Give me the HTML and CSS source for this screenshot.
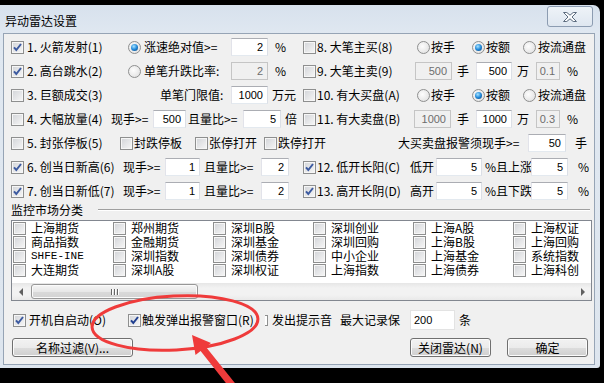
FILE: index.html
```html
<!DOCTYPE html>
<html lang="zh-CN">
<head>
    <meta charset="UTF-8">
    <title>异动雷达设置</title>
    <link rel="stylesheet" href="styles.css">
</head>
<body>
<div class="desk">
    <div class="window">
        <div class="titlebar">
            <span class="title">异动雷达设置</span>
            <span class="close">
                <svg width="14" height="10" viewBox="0 0 14 10"><polygon points="0.5,0.5 3.8,0.5 7,3.2 10.2,0.5 13.5,0.5 9,5 13.5,9.5 10.2,9.5 7,6.8 3.8,9.5 0.5,9.5 5,5" fill="#fbfcfd" stroke="#5d6c7f" stroke-width="1"/></svg>
            </span>
        </div>
        <div class="client">
            <div class="rules">
                <!-- row 1 -->
                <div class="row">
                    <div class="half">
                        <span class="cb on"><svg width="11" height="11" viewBox="0 0 11 11"><polyline points="2,5.3 4.3,8 9,2" fill="none" stroke="#3c5aa0" stroke-width="2"/></svg></span>
                        <span class="t w101">1. 火箭发射(1)</span>
                        <span class="rd on"></span>
                        <span class="t w87 ml3">涨速绝对值&gt;=</span>
                        <span class="box b37">2</span>
                        <span class="t ml7">%</span>
                    </div>
                    <div class="half r">
                        <span class="cb"></span>
                        <span class="t w100">8. 大笔主买(8)</span>
                        <span class="rd"></span><span class="t w41 ml1">按手</span>
                        <span class="rd on"></span><span class="t w37 ml1">按额</span>
                        <span class="rd"></span><span class="t ml2">按流通盘</span>
                    </div>
                </div>
                <!-- row 2 -->
                <div class="row">
                    <div class="half">
                        <span class="cb on"><svg width="11" height="11" viewBox="0 0 11 11"><polyline points="2,5.3 4.3,8 9,2" fill="none" stroke="#3c5aa0" stroke-width="2"/></svg></span>
                        <span class="t w101">2. 高台跳水(2)</span>
                        <span class="rd"></span>
                        <span class="t w87 ml3">单笔升跌比率:</span>
                        <span class="box b37 off">2</span>
                        <span class="t ml7">%</span>
                    </div>
                    <div class="half r">
                        <span class="cb"></span>
                        <span class="t w98">9. 大笔主卖(9)</span>
                        <span class="box b37 off">500</span>
                        <span class="t w19 ml5">手</span>
                        <span class="box b36">500</span>
                        <span class="t w19 ml5">万</span>
                        <span class="box b24 off">0.1</span>
                        <span class="t ml7">%</span>
                    </div>
                </div>
                <!-- row 3 -->
                <div class="row">
                    <div class="half">
                        <span class="cb"></span>
                        <span class="t w133">3. 巨额成交(3)</span>
                        <span class="t w71">单笔门限值:</span>
                        <span class="box b37">1000</span>
                        <span class="t ml4">万元</span>
                    </div>
                    <div class="half r">
                        <span class="cb"></span>
                        <span class="t w100">10. 有大买盘(A)</span>
                        <span class="rd"></span><span class="t w41 ml1">按手</span>
                        <span class="rd on"></span><span class="t w37 ml1">按额</span>
                        <span class="rd"></span><span class="t ml2">按流通盘</span>
                    </div>
                </div>
                <!-- row 4 -->
                <div class="row">
                    <div class="half">
                        <span class="cb"></span>
                        <span class="t w84">4. 大幅放量(4)</span>
                        <span class="t w42">现手&gt;=</span>
                        <span class="box b33">500</span>
                        <span class="t w55 ml2">且量比&gt;=</span>
                        <span class="box b38">5</span>
                        <span class="t ml4">倍</span>
                    </div>
                    <div class="half r">
                        <span class="cb"></span>
                        <span class="t w97">11. 有大卖盘(B)</span>
                        <span class="box b37 off">1000</span>
                        <span class="t w19 ml6">手</span>
                        <span class="box b36">1000</span>
                        <span class="t w19 ml5">万</span>
                        <span class="box b24 off">0.3</span>
                        <span class="t ml7">%</span>
                    </div>
                </div>
                <!-- row 5 -->
                <div class="row">
                    <div class="half">
                        <span class="cb"></span>
                        <span class="t w93">5. 封张停板(5)</span>
                        <span class="cb"></span><span class="t w61 ml-2">封跌停板</span>
                        <span class="cb"></span><span class="t w55 ml-2">张停打开</span>
                        <span class="cb"></span><span class="t ml-2">跌停打开</span>
                    </div>
                    <div class="half r">
                        <span class="t w130 ml95">大买卖盘报警须现手&gt;=</span>
                        <span class="box b38">50</span>
                        <span class="t ml9">手</span>
                    </div>
                </div>
                <!-- row 6 -->
                <div class="row">
                    <div class="half">
                        <span class="cb on"><svg width="11" height="11" viewBox="0 0 11 11"><polyline points="2,5.3 4.3,8 9,2" fill="none" stroke="#3c5aa0" stroke-width="2"/></svg></span>
                        <span class="t w96">6. 创当日新高(6)</span>
                        <span class="t w42">现手&gt;=</span>
                        <span class="box b35">1</span>
                        <span class="t w57 ml4">且量比&gt;=</span>
                        <span class="box b28">2</span>
                    </div>
                    <div class="half r">
                        <span class="cb on"><svg width="11" height="11" viewBox="0 0 11 11"><polyline points="2,5.3 4.3,8 9,2" fill="none" stroke="#3c5aa0" stroke-width="2"/></svg></span>
                        <span class="t w93">12. 低开长阳(C)</span>
                        <span class="t w26">低开</span>
                        <span class="box b46">5</span>
                        <span class="t w46 ml3">%且上涨</span>
                        <span class="box b37">5</span>
                        <span class="t ml10">%</span>
                    </div>
                </div>
                <!-- row 7 -->
                <div class="row">
                    <div class="half">
                        <span class="cb on"><svg width="11" height="11" viewBox="0 0 11 11"><polyline points="2,5.3 4.3,8 9,2" fill="none" stroke="#3c5aa0" stroke-width="2"/></svg></span>
                        <span class="t w96">7. 创当日新低(7)</span>
                        <span class="t w42">现手&gt;=</span>
                        <span class="box b35">1</span>
                        <span class="t w57 ml4">且量比&gt;=</span>
                        <span class="box b28">2</span>
                    </div>
                    <div class="half r">
                        <span class="cb on"><svg width="11" height="11" viewBox="0 0 11 11"><polyline points="2,5.3 4.3,8 9,2" fill="none" stroke="#3c5aa0" stroke-width="2"/></svg></span>
                        <span class="t w93">13. 高开长阴(D)</span>
                        <span class="t w26">高开</span>
                        <span class="box b46">5</span>
                        <span class="t w46 ml3">%且下跌</span>
                        <span class="box b37">5</span>
                        <span class="t ml10">%</span>
                    </div>
                </div>
            </div>

            <div class="group">
                <span class="t">监控市场分类</span>
                <i class="group-line"></i>
            </div>

            <div class="list">
                <div class="markets">
                    <div class="item"><span class="cb"></span>上海期货</div>
                    <div class="item"><span class="cb"></span>商品指数</div>
                    <div class="item"><span class="cb"></span><span class="mono">SHFE-INE</span></div>
                    <div class="item"><span class="cb"></span>大连期货</div>
                    <div class="item"><span class="cb"></span>郑州期货</div>
                    <div class="item"><span class="cb"></span>金融期货</div>
                    <div class="item"><span class="cb"></span>深圳指数</div>
                    <div class="item"><span class="cb"></span>深圳A股</div>
                    <div class="item"><span class="cb"></span>深圳B股</div>
                    <div class="item"><span class="cb"></span>深圳基金</div>
                    <div class="item"><span class="cb"></span>深圳债券</div>
                    <div class="item"><span class="cb"></span>深圳权证</div>
                    <div class="item"><span class="cb"></span>深圳创业</div>
                    <div class="item"><span class="cb"></span>深圳回购</div>
                    <div class="item"><span class="cb"></span>中小企业</div>
                    <div class="item"><span class="cb"></span>上海指数</div>
                    <div class="item"><span class="cb"></span>上海A股</div>
                    <div class="item"><span class="cb"></span>上海B股</div>
                    <div class="item"><span class="cb"></span>上海基金</div>
                    <div class="item"><span class="cb"></span>上海债券</div>
                    <div class="item"><span class="cb"></span>上海权证</div>
                    <div class="item"><span class="cb"></span>上海回购</div>
                    <div class="item"><span class="cb"></span>系统指数</div>
                    <div class="item"><span class="cb"></span>上海科创</div>
                </div>
                <div class="hscroll">
                    <span class="arrow left"></span>
                    <span class="thumb"><i></i><i></i><i></i></span>
                    <span class="arrow right"></span>
                </div>
            </div>

            <div class="opts">
                <span class="cb on"><svg width="11" height="11" viewBox="0 0 11 11"><polyline points="2,5.3 4.3,8 9,2" fill="none" stroke="#3c5aa0" stroke-width="2"/></svg></span>
                <span class="t w99">开机自启动(O)</span>
                <span class="cb on"><svg width="11" height="11" viewBox="0 0 11 11"><polyline points="2,5.3 4.3,8 9,2" fill="none" stroke="#1f3f8f" stroke-width="2"/></svg></span>
                <span class="t w123 ml-2">触发弹出报警窗口(R)</span>
                <span class="cb-cut"></span>
                <span class="t w68 ml4">发出提示音</span>
                <span class="t w70">最大记录保</span>
                <span class="box b45 left">200</span>
                <span class="t ml4">条</span>
            </div>

            <div class="actions">
                <span class="btn wide">名称过滤(V)...</span>
                <span class="btn std push">关闭雷达(N)</span>
                <span class="btn std">确定</span>
            </div>
        </div>
    </div>

    <!-- red annotation drawn over the dialog -->
    <svg class="marks" width="604" height="383" viewBox="0 0 604 383">
        <ellipse cx="175" cy="323" rx="83" ry="27" transform="rotate(-3 175 323)" fill="none" stroke="#ef3b3b" stroke-width="3"/>
        <polygon points="192,335 211,343 206,347 238.5,387.5 233,392 200.6,351 195.5,355" fill="#ef3b3b"/>
    </svg>
</div>
</body>
</html>
```

FILE: styles.css
```css
body {
    margin: 0;
    background: #000;
    font-family: "Noto Sans CJK SC", "Noto Sans", sans-serif;
    font-size: 12px;
    color: #000;
}
.desk {
    position: relative;
    width: 604px;
    height: 383px;
    overflow: hidden;
}
.window {
    margin-top: 5px;
    width: 600px;
    height: 363px;
    box-sizing: border-box;
    padding: 0 5px 3px 3px;
    background: linear-gradient(#d7e1ed, #e0e8f1 30px, #dde5ee);
    border-radius: 0 7px 3px 0;
    display: flex;
    flex-direction: column;
}
.titlebar {
    height: 28px;
    display: flex;
    align-items: flex-start;
    flex: none;
}
.title {
    margin: 9px 0 0 2px;
    line-height: 14px;
}
.close {
    margin: 1px 2px 0 auto;
    width: 46px;
    height: 21px;
    box-sizing: border-box;
    border: 1px solid #8c9cb1;
    border-radius: 3px;
    background: linear-gradient(#eef3f8, #dfe7f0);
    display: flex;
    align-items: center;
    justify-content: center;
}
.client {
    flex: 1;
    border: 1px solid #96a4b5;
    background: #f0f0f0;
    display: flex;
    flex-direction: column;
}

/* rule rows */
.rules {
    padding: 1px 0 0 7px;
}
.row {
    height: 24px;
    display: flex;
    align-items: center;
}
.half {
    width: 292px;
    flex: none;
    display: flex;
    align-items: center;
    white-space: nowrap;
}
.half.r {
    width: auto;
}
.t {
    flex: none;
    line-height: 14px;
    white-space: nowrap;
}

.cb {
    flex: none;
    width: 13px;
    height: 13px;
    box-sizing: border-box;
    border: 1px solid #8e8f8f;
    background: linear-gradient(135deg, #d2d4d8, #f7f7f7);
    box-shadow: inset 0 0 0 1px #f6f6f6;
    margin-right: 3px;
    display: flex;
    align-items: center;
    justify-content: center;
}
.half.r .cb {
    margin-right: 1px;
}
.cb svg {
    display: block;
}
.cb-cut {
    flex: none;
    width: 2px;
    height: 9px;
    border: 1px solid #8e8f8f;
    border-left: none;
    background: #fff;
}

.rd {
    flex: none;
    width: 13px;
    height: 13px;
    box-sizing: border-box;
    border-radius: 50%;
    border: 1px solid #8e8f8f;
    background: radial-gradient(circle at 40% 40%, #fdfdfd, #dcdcdc);
    display: flex;
    align-items: center;
    justify-content: center;
}
.rd.on::after {
    content: "";
    width: 7px;
    height: 7px;
    border-radius: 50%;
    background: radial-gradient(circle at 40% 35%, #a8e4ff, #2189da 50%, #0b3d70);
}

.box {
    flex: none;
    height: 18px;
    box-sizing: border-box;
    border: 1px solid;
    border-color: #abadb3 #dbdfe6 #e3e9ef #e2e3ea;
    background: #fff;
    font-family: "Liberation Sans", Arial, sans-serif;
    font-size: 11px;
    line-height: 16px;
    text-align: right;
    padding-right: 4px;
}
.box.off {
    background: #f0f0f0;
    border-color: #c5c5c5;
    color: #6d6d6d;
}
.box.left {
    text-align: left;
    padding: 0 0 0 3px;
    height: 20px;
    line-height: 18px;
    border-color: #e3e3e3;
}

.b24 { width: 24px; }
.b28 { width: 28px; }
.b33 { width: 33px; }
.b35 { width: 35px; }
.b36 { width: 36px; }
.b37 { width: 37px; }
.b38 { width: 38px; }
.b45 { width: 45px; }
.b46 { width: 46px; }

.w19 { width: 19px; }
.w26 { width: 26px; }
.w37 { width: 37px; }
.w41 { width: 41px; }
.w42 { width: 42px; }
.w46 { width: 46px; }
.w55 { width: 55px; }
.w57 { width: 57px; }
.w61 { width: 61px; }
.w68 { width: 68px; }
.w70 { width: 70px; }
.w71 { width: 71px; }
.w84 { width: 84px; }
.w87 { width: 87px; }
.w93 { width: 93px; }
.w96 { width: 96px; }
.w97 { width: 97px; }
.w98 { width: 98px; }
.w99 { width: 99px; }
.w100 { width: 100px; }
.w101 { width: 101px; }
.w123 { width: 123px; }
.w130 { width: 130px; }
.w133 { width: 133px; }

.ml-2 { margin-left: -2px; }
.ml1 { margin-left: 1px; }
.ml2 { margin-left: 2px; }
.ml3 { margin-left: 3px; }
.ml4 { margin-left: 4px; }
.ml5 { margin-left: 5px; }
.ml6 { margin-left: 6px; }
.ml7 { margin-left: 7px; }
.ml9 { margin-left: 9px; }
.ml10 { margin-left: 10px; }
.ml95 { margin-left: 95px; }

/* market list */
.group {
    height: 14px;
    margin: 0 0 3px 7px;
    display: flex;
    align-items: center;
}
.group-line {
    flex: 1;
    height: 0;
    border-top: 1px solid #a0a0a0;
    border-bottom: 1px solid #fff;
    margin: 0 4px 0 15px;
}
.list {
    margin-left: 7px;
    width: 581px;
    height: 81px;
    box-sizing: border-box;
    border: 1px solid #828790;
    background: #fff;
    display: flex;
    flex-direction: column;
    overflow: hidden;
}
.markets {
    display: grid;
    grid-template-rows: repeat(4, 14px);
    grid-auto-flow: column;
    grid-auto-columns: 100px;
    padding-left: 1px;
    height: 56px;
}
.item {
    display: flex;
    align-items: center;
    white-space: nowrap;
    line-height: 14px;
}
.item .cb {
    margin-right: 5px;
}
.mono {
    font-family: "Liberation Mono", monospace;
    font-size: 11px;
}
.hscroll {
    margin-top: auto;
    height: 17px;
    flex: none;
    display: flex;
    background: linear-gradient(#e6e6e6, #f2f2f2 30%, #f2f2f2 70%, #e9e9e9);
}
.arrow {
    width: 17px;
    flex: none;
    display: flex;
    align-items: center;
    justify-content: center;
}
.arrow::before {
    content: "";
    border-top: 4px solid transparent;
    border-bottom: 4px solid transparent;
}
.arrow.left::before {
    border-right: 4px solid #606060;
}
.arrow.right {
    margin-left: auto;
}
.arrow.right::before {
    border-left: 4px solid #606060;
}
.thumb {
    margin: 1px 0 1px 2px;
    width: 167px;
    box-sizing: border-box;
    border: 1px solid #979797;
    border-radius: 3px;
    background: linear-gradient(#f5f5f5, #e8e8e8 50%, #dadada 51%, #d3d3d3);
    box-shadow: inset 0 0 0 1px #fbfbfb;
    display: flex;
    align-items: center;
    justify-content: center;
    gap: 1px;
}
.thumb i {
    width: 1px;
    height: 6px;
    background: #666;
    border-right: 1px solid #fff;
}

/* bottom */
.opts {
    display: flex;
    align-items: center;
    height: 20px;
    margin-top: 9px;
    padding-left: 9px;
    white-space: nowrap;
}
.actions {
    display: flex;
    gap: 16px;
    margin-top: 8px;
    padding: 0 6px 0 8px;
}
.btn {
    height: 19px;
    box-sizing: border-box;
    border: 1px solid #707070;
    border-radius: 3px;
    background: linear-gradient(#f2f2f2, #ebebeb 50%, #dddddd 51%, #cfcfcf);
    box-shadow: inset 0 0 0 1px #fbfbfb;
    display: flex;
    align-items: center;
    justify-content: center;
    line-height: 14px;
}
.btn.wide { width: 121px; }
.btn.std { width: 81px; }
.btn.push { margin-left: auto; }

.marks {
    position: absolute;
    left: 0;
    top: 0;
    pointer-events: none;
}
```
